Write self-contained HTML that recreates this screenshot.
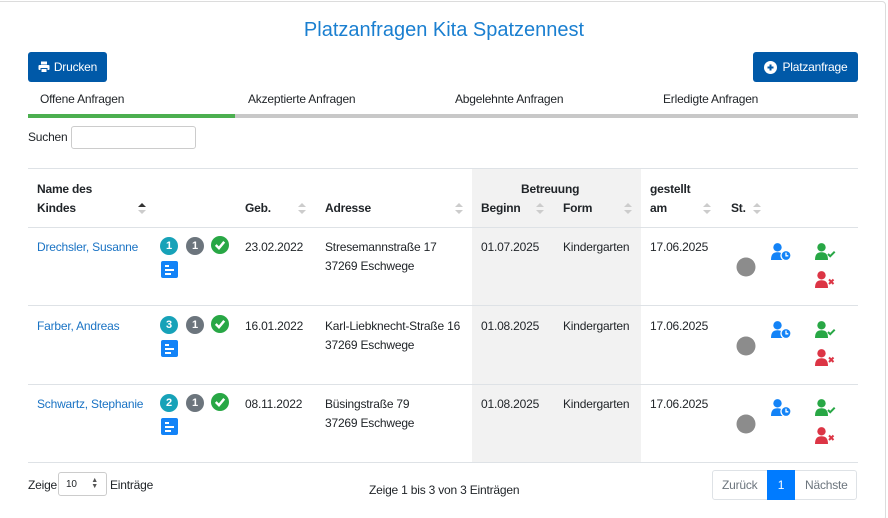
<!DOCTYPE html>
<html style="width:888px;height:518px;overflow:hidden"><head><meta charset="utf-8"><style>
*{box-sizing:border-box;margin:0;padding:0}
body{width:888px;height:518px;background:#fff;font-family:"Liberation Sans",sans-serif;font-size:12px;letter-spacing:-0.2px;color:#212529;position:relative;overflow:hidden}
.a{position:absolute;white-space:nowrap}
.frame{position:absolute;left:-4px;top:1px;width:890px;height:520px;border:1px solid #dcdcdc;border-radius:4px}
.btn{position:absolute;background:#0059a8;color:#fff;border-radius:3px;font-size:12px;display:flex;align-items:center;justify-content:center}
.b{font-weight:bold}
.link{color:#1a73c4}
.circ{position:absolute;width:18px;height:18px;border-radius:50%;color:#fff;font-weight:bold;font-size:11px;text-align:center;line-height:18px;letter-spacing:0}
.sq{position:absolute;width:17px;height:17px;border-radius:2px;background:#1383f7}
.sq i{position:absolute;left:4px;height:2px;background:#fff}
.sort{position:absolute;width:8px;height:12px}
.sort:before{content:"";position:absolute;left:0;top:0;border:4px solid transparent;border-bottom:4px solid #ccc;border-top:0}
.sort:after{content:"";position:absolute;left:0;top:7px;border:4px solid transparent;border-top:4px solid #ccc;border-bottom:0}
.sort.act:before{border-bottom-color:#333}
.hl{position:absolute;left:28px;width:830px;height:1px;background:#dee2e6}
</style></head><body>
<div class="frame"></div>
<div class="a" style="left:0;width:888px;text-align:center;top:19px;font-size:20px;color:#1a7fd0;letter-spacing:0">Platzanfragen Kita Spatzennest</div>
<div class="btn" style="left:28px;top:52px;width:79px;height:30px"><svg width="12" height="12" viewBox="0 0 12 12" style="margin-right:4px"><rect x="3" y="0.5" width="6" height="3" fill="#fff"/><rect x="0.5" y="4" width="11" height="5" rx="1" fill="#fff"/><rect x="3" y="7.5" width="6" height="4" fill="#fff" stroke="#0059a8" stroke-width="1"/></svg>Drucken</div>
<div class="btn" style="left:753px;top:52px;width:105px;height:30px"><svg width="13" height="13" viewBox="0 0 13 13" style="margin-right:6px"><circle cx="6.5" cy="6.5" r="6.5" fill="#fff"/><path d="M6.5 3.5v6M3.5 6.5h6" stroke="#0059a8" stroke-width="2"/></svg>Platzanfrage</div>
<div class="a" style="left:40px;top:92px">Offene Anfragen</div>
<div class="a" style="left:248px;top:92px">Akzeptierte Anfragen</div>
<div class="a" style="left:455px;top:92px">Abgelehnte Anfragen</div>
<div class="a" style="left:663px;top:92px">Erledigte Anfragen</div>
<div class="a" style="left:28px;top:114px;width:830px;height:4px;background:#c8c8c8"></div>
<div class="a" style="left:28px;top:114px;width:207px;height:4px;background:#4caf50"></div>
<div class="a" style="left:28px;top:130px">Suchen</div>
<div class="a" style="left:71px;top:126px;width:125px;height:23px;border:1px solid #ccc;border-radius:3px"></div>
<div class="a" style="left:472px;top:168px;width:169px;height:294px;background:#f2f2f2"></div>
<div class="hl" style="top:168px"></div>
<div class="hl" style="top:227px"></div>
<div class="hl" style="top:305px"></div>
<div class="hl" style="top:384px"></div>
<div class="hl" style="top:462px"></div>
<div class="a b" style="left:37px;top:182px">Name des</div>
<div class="a b" style="left:37px;top:201px">Kindes</div>
<div class="sort act" style="left:138px;top:203px"></div>
<div class="a b" style="left:245px;top:201px">Geb.</div><div class="sort" style="left:298px;top:203px"></div>
<div class="a b" style="left:325px;top:201px">Adresse</div><div class="sort" style="left:455px;top:203px"></div>
<div class="a b" style="left:521px;top:182px">Betreuung</div>
<div class="a b" style="left:481px;top:201px">Beginn</div><div class="sort" style="left:536px;top:203px"></div>
<div class="a b" style="left:563px;top:201px">Form</div><div class="sort" style="left:624px;top:203px"></div>
<div class="a b" style="left:650px;top:182px">gestellt</div>
<div class="a b" style="left:650px;top:201px">am</div><div class="sort" style="left:703px;top:203px"></div>
<div class="a b" style="left:731px;top:201px">St.</div><div class="sort" style="left:753px;top:203px"></div>

<div class="a link" style="left:37px;top:240px">Drechsler, Susanne</div>
<div class="circ" style="left:160px;top:237px;background:#17a2b8">1</div>
<div class="circ" style="left:186px;top:237px;background:#6c757d">1</div>
<div class="circ" style="left:211px;top:236px;background:#28a745"><svg width="18" height="18" viewBox="0 0 17 17" style="position:absolute;left:0;top:0"><path d="M4.5 8.5l3 3 5-6" stroke="#fff" stroke-width="2.3" fill="none"/></svg></div>
<div class="sq" style="left:161px;top:261px"><i style="top:4px;width:4px"></i><i style="top:8px;width:9px"></i><i style="top:12px;width:6px"></i></div>
<div class="a" style="left:245px;top:240px">23.02.2022</div>
<div class="a" style="left:325px;top:240px">Stresemannstraße 17</div>
<div class="a" style="left:325px;top:259px">37269 Eschwege</div>
<div class="a" style="left:481px;top:240px">01.07.2025</div>
<div class="a" style="left:563px;top:240px">Kindergarten</div>
<div class="a" style="left:650px;top:240px">17.06.2025</div>

<div class="a link" style="left:37px;top:319px">Farber, Andreas</div>
<div class="circ" style="left:160px;top:316px;background:#17a2b8">3</div>
<div class="circ" style="left:186px;top:316px;background:#6c757d">1</div>
<div class="circ" style="left:211px;top:315px;background:#28a745"><svg width="18" height="18" viewBox="0 0 17 17" style="position:absolute;left:0;top:0"><path d="M4.5 8.5l3 3 5-6" stroke="#fff" stroke-width="2.3" fill="none"/></svg></div>
<div class="sq" style="left:161px;top:340px"><i style="top:4px;width:4px"></i><i style="top:8px;width:9px"></i><i style="top:12px;width:6px"></i></div>
<div class="a" style="left:245px;top:319px">16.01.2022</div>
<div class="a" style="left:325px;top:319px">Karl-Liebknecht-Straße 16</div>
<div class="a" style="left:325px;top:338px">37269 Eschwege</div>
<div class="a" style="left:481px;top:319px">01.08.2025</div>
<div class="a" style="left:563px;top:319px">Kindergarten</div>
<div class="a" style="left:650px;top:319px">17.06.2025</div>

<div class="a link" style="left:37px;top:397px">Schwartz, Stephanie</div>
<div class="circ" style="left:160px;top:394px;background:#17a2b8">2</div>
<div class="circ" style="left:186px;top:394px;background:#6c757d">1</div>
<div class="circ" style="left:211px;top:393px;background:#28a745"><svg width="18" height="18" viewBox="0 0 17 17" style="position:absolute;left:0;top:0"><path d="M4.5 8.5l3 3 5-6" stroke="#fff" stroke-width="2.3" fill="none"/></svg></div>
<div class="sq" style="left:161px;top:418px"><i style="top:4px;width:4px"></i><i style="top:8px;width:9px"></i><i style="top:12px;width:6px"></i></div>
<div class="a" style="left:245px;top:397px">08.11.2022</div>
<div class="a" style="left:325px;top:397px">Büsingstraße 79</div>
<div class="a" style="left:325px;top:416px">37269 Eschwege</div>
<div class="a" style="left:481px;top:397px">01.08.2025</div>
<div class="a" style="left:563px;top:397px">Kindergarten</div>
<div class="a" style="left:650px;top:397px">17.06.2025</div>

<svg class="a" style="left:0;top:0" width="888" height="518">
<defs>
<g id="pc"><circle cx="6.5" cy="4.3" r="4.2" fill="#1383f7"/><path d="M0 17c0-6 2.5-7.8 6.5-7.8s6.5 1.8 6.5 7.8z" fill="#1383f7"/><circle cx="15" cy="12.5" r="5" fill="#1383f7" stroke="#fff" stroke-width="1.3"/><path d="M15 9.6v3.2h2.3" stroke="#fff" stroke-width="1.3" fill="none"/></g>
<g id="pg"><circle cx="6.5" cy="4.3" r="4.2" fill="#28a745"/><path d="M0 17c0-6 2.5-7.8 6.5-7.8s6.5 1.8 6.5 7.8z" fill="#28a745"/><path d="M13 11l2.2 2.2 4.5-4.5" stroke="#28a745" stroke-width="2" fill="none"/></g>
<g id="pr"><circle cx="6.5" cy="4.3" r="4.2" fill="#dc3545"/><path d="M0 17c0-6 2.5-7.8 6.5-7.8s6.5 1.8 6.5 7.8z" fill="#dc3545"/><path d="M14 8.5l4.5 4.5M18.5 8.5l-4.5 4.5" stroke="#dc3545" stroke-width="2"/></g>
</defs>
<circle cx="746" cy="267" r="9.5" fill="#8c8c8c"/>
<circle cx="746" cy="346" r="9.5" fill="#8c8c8c"/>
<circle cx="746" cy="424" r="9.5" fill="#8c8c8c"/>
<use href="#pc" x="771" y="243"/><use href="#pg" x="815" y="243"/><use href="#pr" x="815" y="271"/>
<use href="#pc" x="771" y="321"/><use href="#pg" x="815" y="321"/><use href="#pr" x="815" y="349"/>
<use href="#pc" x="771" y="399"/><use href="#pg" x="815" y="399"/><use href="#pr" x="815" y="427"/>
</svg>

<div class="a" style="left:28px;top:478px">Zeige</div>
<div class="a" style="left:58px;top:472px;width:49px;height:24px;border:1px solid #ccc;border-radius:3px;font-size:10px;padding:6px 0 0 7px">10<span style="position:absolute;right:8px;top:5px;font-size:7px;line-height:6px;color:#555">▲<br>▼</span></div>
<div class="a" style="left:110px;top:478px">Einträge</div>
<div class="a" style="left:369px;top:483px">Zeige 1 bis 3 von 3 Einträgen</div>
<div class="a" style="left:712px;top:470px;width:145px;height:30px;border:1px solid #dee2e6;border-radius:3px"></div>
<div class="a" style="left:722px;top:478px;color:#6c757d">Zurück</div>
<div class="a" style="left:767px;top:470px;width:28px;height:30px;background:#007bff;color:#fff;text-align:center;line-height:30px">1</div>
<div class="a" style="left:805px;top:478px;color:#6c757d">Nächste</div>
</body></html>
